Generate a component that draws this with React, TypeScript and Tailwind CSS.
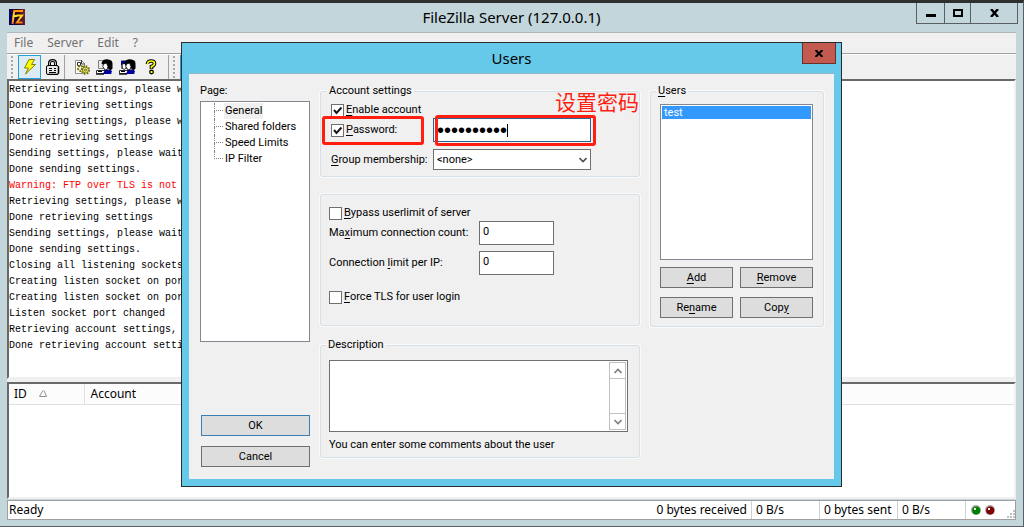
import React, { useState } from "react";

const UI = "font-['Roboto',sans-serif]";

const logLines = [
  { text: "Retrieving settings, please wait" },
  { text: "Done retrieving settings" },
  { text: "Retrieving settings, please wait" },
  { text: "Done retrieving settings" },
  { text: "Sending settings, please wait" },
  { text: "Done sending settings." },
  { text: "Warning: FTP over TLS is not", warn: true },
  { text: "Retrieving settings, please wait" },
  { text: "Done retrieving settings" },
  { text: "Sending settings, please wait" },
  { text: "Done sending settings." },
  { text: "Closing all listening sockets" },
  { text: "Creating listen socket on port" },
  { text: "Creating listen socket on port" },
  { text: "Listen socket port changed" },
  { text: "Retrieving account settings," },
  { text: "Done retrieving account settings" },
];

const pages = ["General", "Shared folders", "Speed Limits", "IP Filter"];

function AppLogo() {
  return (
    <svg width="16" height="16" viewBox="0 0 16 16">
      <defs>
        <linearGradient id="logo-bg" x1="0" y1="0.2" x2="1" y2="0">
          <stop offset="0" stopColor="#000060" />
          <stop offset="0.5" stopColor="#300818" />
          <stop offset="1" stopColor="#802838" />
        </linearGradient>
        <linearGradient id="logo-fg" gradientUnits="userSpaceOnUse" x1="0" y1="1" x2="0" y2="15">
          <stop offset="0" stopColor="#ff8800" />
          <stop offset="0.45" stopColor="#ffe820" />
          <stop offset="1" stopColor="#ff6a10" />
        </linearGradient>
      </defs>
      <rect width="16" height="16" fill="url(#logo-bg)" />
      <path d="M3.5 15 L5.2 2 H14 M4.8 7 H8" fill="none" stroke="url(#logo-fg)" strokeWidth="2" />
      <path d="M7.5 6.6 H13 L8 13.4 H13.5" fill="none" stroke="url(#logo-fg)" strokeWidth="2" />
    </svg>
  );
}

function BoltIcon() {
  return (
    <svg width="16" height="16" viewBox="0 0 16 16">
      <path d="M7 0.5 H12.5 L9.5 5.5 H13.5 L3.5 15 L6.5 9 H2.5 Z" fill="#ffff00" stroke="#808000" />
    </svg>
  );
}

function LockIcon() {
  return (
    <svg width="16" height="16" viewBox="0 0 16 16">
      <path d="M4.5 8 V4 Q4.5 1.5 7.5 1.5 T10.5 4 V8" fill="none" stroke="#000" strokeWidth="3" />
      <path d="M4.5 8 V4 Q4.5 1.5 7.5 1.5 T10.5 4 V8" fill="none" stroke="#c0c0c0" strokeWidth="1" />
      <rect x="1.5" y="6.5" width="12" height="9" rx="1.5" fill="#e8e8e8" stroke="#000" />
      <path d="M13.5 7.5 V14.5 M3 15.5 H13" stroke="#000" strokeWidth="1.5" />
      <path d="M4 9.5 H7 M9 9.5 H11 M4 11.5 H7 M9 11.5 H11 M4 13.5 H11" stroke="#000" />
    </svg>
  );
}

function SettingsIcon() {
  return (
    <svg width="16" height="16" viewBox="0 0 16 16">
      <path d="M1.5 1.5 H7.5 L10.5 4.5 V14.5 H1.5 Z" fill="#fff" stroke="#909090" />
      <path d="M7.5 1 V5 H11" fill="none" stroke="#404040" />
      <path d="M3.5 3.5 H6.5 V6.5 H3.5 Z" fill="none" stroke="#303030" />
      <circle cx="6.5" cy="9.5" r="2.5" fill="none" stroke="#808000" strokeWidth="2" strokeDasharray="2 1" />
      <circle cx="11.5" cy="11" r="3" fill="#f0e870" stroke="#808000" strokeWidth="1" />
      <circle cx="11.5" cy="11" r="4" fill="none" stroke="#606000" strokeWidth="1.5" strokeDasharray="1.5 1.6" />
      <circle cx="11.5" cy="11" r="1" fill="#fff" stroke="#404000" strokeWidth="0.8" />
    </svg>
  );
}

function UserIcon({ group }: { group?: boolean }) {
  return (
    <svg width="17" height="16" viewBox="0 0 17 16">
      <path d="M2.5 1.5 H10 V9.5 H2.5 Z" fill="#e8e8e8" stroke="#808080" />
      <path d="M0.5 11.5 H13 L15 14.5 H0.5 Z" fill="#fff" stroke="#303030" />
      <path d="M7 15 L9 10.5 H13.5 L16 12 L15 15 Z" fill="#0000a0" />
      {group && (
        <>
          <path d="M2 2 H8 V6 H2 Z" fill="#0000a0" />
          <path d="M3 5 L6 4.5 L7.5 8 L5.5 10.5 L3.5 9.5 Z" fill="#fff" stroke="#000" strokeWidth="0.8" />
        </>
      )}
      <path d="M5.5 4.5 Q6 0.2 11 0.2 Q16.5 0.5 16.5 4.5 V9.5 L14.5 11.5 L11.5 9 Z" fill="#000" />
      <path d="M7.5 5 L10.5 4 L12 7.5 L11 10.5 L9 11 L7.8 9 L6.8 7.5 Z" fill="#fff" stroke="#000" strokeWidth="0.8" />
      <path d="M0 15.2 H8 M2 12.5 H6" stroke="#000" />
    </svg>
  );
}

function HelpIcon() {
  return (
    <svg width="16" height="16" viewBox="0 0 16 16">
      <path d="M4.5 5 Q4.5 2 8 2 T11.5 4.5 Q11.5 6.5 8.5 7.5 V10" fill="none" stroke="#000" strokeWidth="3.6" />
      <circle cx="8.5" cy="13" r="2.4" fill="#000" />
      <path d="M4.5 5.5 Q4.5 2 8 2 T11.5 4.5 Q11.5 6.5 8.5 7.5 V9.5" fill="none" stroke="#ffff00" strokeWidth="1.6" />
      <rect x="7.5" y="12" width="2" height="2" fill="#ffff00" />
    </svg>
  );
}

function Led({ color }: { color: string }) {
  return (
    <svg width="10" height="10" viewBox="0 0 10 10">
      <circle cx="5" cy="5" r="5" fill="#a8a8a8" />
      <circle cx="5.2" cy="5.4" r="4" fill={color} />
      <rect x="3" y="3" width="2" height="2" fill="#fff" />
    </svg>
  );
}

function Chevron({ up, dark }: { up?: boolean; dark?: boolean }) {
  return (
    <svg width="8" height="6" viewBox="0 0 8 6">
      <path
        d={up ? "M0.5 5 L4 1.5 L7.5 5" : "M0.5 1 L4 4.5 L7.5 1"}
        fill="none"
        stroke={dark ? "#505050" : "#808080"}
        strokeWidth="1.6"
      />
    </svg>
  );
}

// Label text with its Alt-key letter underlined
function Hot({ text, at }: { text: string; at: number }) {
  return (
    <span className="whitespace-pre">
      {text.slice(0, at)}
      <span className="underline underline-offset-2">{text[at]}</span>
      {text.slice(at + 1)}
    </span>
  );
}

function Check({ text, checked, onChange }: { text: string; checked: boolean; onChange: () => void }) {
  return (
    <label className="flex items-center gap-[2px]">
      <span className="relative flex size-[13px]">
        <input
          type="checkbox"
          checked={checked}
          onChange={onChange}
          className="size-[13px] appearance-none border border-[#707070] bg-white"
        />
        {checked && (
          <svg className="pointer-events-none absolute inset-0" width="13" height="13" viewBox="0 0 13 13">
            <path d="M3 6 L5.5 9 L10.5 3.5" fill="none" stroke="#1a1a1a" strokeWidth="2" />
          </svg>
        )}
      </span>
      <Hot text={text} at={0} />
    </label>
  );
}

function DialogButton({ text, at, primary }: { text: string; at?: number; primary?: boolean }) {
  return (
    <button
      type="button"
      className={`flex h-[21px] w-full items-center justify-center border bg-[#dddddd] ${
        primary ? "border-[#3c7fb1]" : "border-[#707070]"
      }`}
    >
      {at === undefined ? text : <Hot text={text} at={at} />}
    </button>
  );
}

const groupBox = "min-w-0 rounded-[3px] border border-[#d5dfe5] shadow-[0_0_0_1px_#fafafa]";

function UsersDialog() {
  const [page, setPage] = useState("General");
  const [enabled, setEnabled] = useState(true);
  const [usePassword, setUsePassword] = useState(true);
  const [bypass, setBypass] = useState(false);
  const [forceTls, setForceTls] = useState(false);
  const [password, setPassword] = useState("••••••••••");

  return (
    <div
      role="dialog"
      aria-label="Users"
      className="absolute left-[181px] top-[39px] w-[661px] border border-[#2b2b2b] bg-[#66c9e9] px-[7px] pb-[7px]"
    >
      <div className="relative flex h-[30px] items-center justify-center">
        <h2 className="font-['Noto_Sans',sans-serif] text-[15px] text-black">Users</h2>
        <button
          type="button"
          aria-label="Close"
          className="absolute -right-[2px] top-0 flex h-[21px] w-[34px] items-center justify-center border border-t-0 border-[#6b2f2b] bg-[#c35a50]"
        >
          <svg width="8" height="7" viewBox="0 0 8 7">
            <path d="M0.5 0 L7.5 7 M7.5 0 L0.5 7" stroke="#000" strokeWidth="2" />
          </svg>
        </button>
      </div>

      <div className={`flex border-t border-[#8fb5c5] bg-[#f0f0f0] pb-3 pl-[11px] pr-[10px] pt-[9px] text-[11px] leading-4 text-black ${UI}`}>
        {/* Page tree and dialog buttons */}
        <div className="flex w-[110px] flex-col">
          <span>Page:</span>
          <ul className="mt-[2px] h-[241px] border border-[#828790] bg-white py-px pl-[13px]">
            {pages.map((p, i) => (
              <li key={p} className="flex h-4 items-center">
                <span className="flex h-4 w-[9px] flex-col">
                  <span className="h-2 border-b border-l border-dotted border-[#808080]" />
                  {i < pages.length - 1 && <span className="h-2 border-l border-dotted border-[#808080]" />}
                </span>
                <button
                  type="button"
                  onClick={() => setPage(p)}
                  className={`ml-px px-px text-left leading-4 ${page === p ? "bg-[#f0f0f0]" : ""}`}
                >
                  {p}
                </button>
              </li>
            ))}
          </ul>
          <div className="mt-[73px] flex flex-col gap-[10px] pl-px">
            <DialogButton text="OK" primary />
            <DialogButton text="Cancel" />
          </div>
        </div>

        {/* Account settings */}
        <div className="ml-[10px] flex w-[320px] flex-col">
          <fieldset className={`relative ${groupBox} pb-[6px] pl-[10px]`}>
            <legend className="-ml-1 px-[2px]">Account settings</legend>
            <div className="mt-[3px] flex h-4 items-center">
              <Check text="Enable account" checked={enabled} onChange={() => setEnabled(!enabled)} />
            </div>
            <div className="grid grid-cols-[102px_158px] items-center gap-y-[7px]">
              <Check text="Password:" checked={usePassword} onChange={() => setUsePassword(!usePassword)} />
              <div className="flex h-6 items-center border border-[#2a6496] bg-white px-[3px]">
                <input
                  aria-label="Password"
                  value={password}
                  onChange={(e) => setPassword(e.target.value)}
                  className="w-[70px] bg-transparent font-['Liberation_Sans',sans-serif] text-[20px] leading-5 outline-none"
                />
                <span className="h-[13px] w-px bg-black" />
              </div>
              <label htmlFor="group">
                <Hot text="Group membership:" at={0} />
              </label>
              <div className="relative">
                <select id="group" className="block h-[21px] w-full appearance-none border border-[#707070] bg-white pl-[3px]">
                  <option>&lt;none&gt;</option>
                </select>
                <span className="pointer-events-none absolute inset-y-0 right-1 flex items-center">
                  <Chevron dark />
                </span>
              </div>
            </div>

            {/* Highlight marks */}
            <div className="pointer-events-none absolute left-px top-[17px] h-[29px] w-[102px] rounded-[3px] border-[3px] border-[#ff1e10]" />
            <div className="pointer-events-none absolute left-[114px] top-4 h-[31px] w-[161px] rounded-[3px] border-[3px] border-[#ff1e10]" />
            <span className="pointer-events-none absolute -top-3 right-0 font-['Noto_Sans_CJK_SC',sans-serif] text-[21px] leading-7 text-[#ff1e10]">
              设置密码
            </span>
          </fieldset>

          <fieldset className={`${groupBox} mt-[17px] pb-5 pl-2 pt-[10px]`}>
            <div className="flex h-4 items-center">
              <Check text="Bypass userlimit of server" checked={bypass} onChange={() => setBypass(!bypass)} />
            </div>
            <div className="grid grid-cols-[150px_75px] items-center gap-y-[6px]">
              <label htmlFor="max-count">
                <Hot text="Maximum connection count:" at={2} />
              </label>
              <input id="max-count" defaultValue="0" className="h-6 border border-[#707070] bg-white pb-1 pl-[3px] outline-none" />
              <label htmlFor="ip-limit">
                <Hot text="Connection limit per IP:" at={11} />
              </label>
              <input id="ip-limit" defaultValue="0" className="h-6 border border-[#707070] bg-white pb-1 pl-[3px] outline-none" />
            </div>
            <div className="mt-[14px] flex h-4 items-center">
              <Check text="Force TLS for user login" checked={forceTls} onChange={() => setForceTls(!forceTls)} />
            </div>
          </fieldset>

          <fieldset className={`${groupBox} mt-[11px] pb-1 pl-2 pr-[11px]`}>
            <legend className="-ml-[3px] px-[2px]">Description</legend>
            <div className="mt-[7px] flex h-[72px] border border-[#707070] bg-white p-px">
              <textarea aria-label="Description" className="min-w-0 flex-1 resize-none outline-none" />
              <div className="flex w-[17px] flex-col border border-[#c0c0c0]">
                <span className="flex h-4 items-center justify-center border-b border-[#c0c0c0]">
                  <Chevron up />
                </span>
                <span className="flex-1" />
                <span className="flex h-4 items-center justify-center border-t border-[#c0c0c0]">
                  <Chevron />
                </span>
              </div>
            </div>
            <p className="mt-[5px]">You can enter some comments about the user</p>
          </fieldset>
        </div>

        {/* User list */}
        <div className="ml-[10px] min-w-0 flex-1">
          <fieldset className={`${groupBox} pb-2 pl-[9px] pr-[10px]`}>
            <legend className="-ml-1 px-[2px]">
              <Hot text="Users" at={0} />
            </legend>
            <ul className="mt-[5px] h-[156px] border border-[#828790] bg-white p-px">
              <li className="h-[13px] bg-[#3399ff] pl-[2px] leading-[13px] text-white">test</li>
            </ul>
            <div className="mt-[7px] grid grid-cols-2 gap-x-[7px] gap-y-[9px]">
              <DialogButton text="Add" at={0} />
              <DialogButton text="Remove" at={0} />
              <DialogButton text="Rename" at={2} />
              <DialogButton text="Copy" at={3} />
            </div>
          </fieldset>
        </div>
      </div>
    </div>
  );
}

function Grip() {
  return (
    <svg width="3" height="22" viewBox="0 0 3 22" className="mx-1">
      {[0, 4, 8, 12, 16, 20].map((y) => (
        <rect key={y} x="0" y={y} width="2" height="2" fill="#a8a8a8" />
      ))}
    </svg>
  );
}

export default function App() {
  return (
    <div className="relative flex h-screen flex-col border-b border-r border-t-[3px] border-[#5a5f66] border-t-[#2f2f2f] bg-[#c3d6db] px-[7px] pb-[6px] font-['Noto_Sans',sans-serif] text-[12px] text-black">
      {/* Title bar */}
      <header className="relative flex h-[29px] shrink-0 items-center justify-center">
        <span className="absolute left-[2px] top-[6px]">
          <AppLogo />
        </span>
        <h1 className="text-[15px]">FileZilla Server (127.0.0.1)</h1>
        <div className="absolute -right-[2px] top-0 flex h-[21px] divide-x divide-[#5a5f66] border border-t-0 border-[#5a5f66]">
          <button type="button" aria-label="Minimize" className="flex w-7 items-center justify-center pt-1">
            <span className="h-[3px] w-[10px] bg-black" />
          </button>
          <button type="button" aria-label="Maximize" className="flex w-[26px] items-center justify-center">
            <span className="h-2 w-[10px] border-2 border-black" />
          </button>
          <button type="button" aria-label="Close" className="flex w-[46px] items-center justify-center">
            <svg width="9" height="8" viewBox="0 0 9 8">
              <path d="M1 0 L8 8 M8 0 L1 8" stroke="#000" strokeWidth="2.4" />
            </svg>
          </button>
        </div>
      </header>

      <nav className="flex h-[22px] shrink-0 items-center gap-[14px] border-b border-t border-b-[#a0a0a0] border-t-[#b0b8bc] bg-[#f0f0f0] pl-[7px] text-[#707070]">
        <button type="button">File</button>
        <button type="button">Server</button>
        <button type="button">Edit</button>
        <button type="button">?</button>
      </nav>

      {/* Toolbar */}
      <div className="flex h-[25px] shrink-0 items-center border-t border-white bg-[#f0f0f0]">
        <Grip />
        <button type="button" aria-label="Connect" className="flex h-6 w-[23px] items-center justify-center border border-[#26a0da] bg-[#dcebf4]">
          <BoltIcon />
        </button>
        <button type="button" aria-label="Lock server" className="flex h-6 w-[23px] items-center justify-center">
          <LockIcon />
        </button>
        <span className="h-6 w-px bg-[#a0a0a0]" />
        <button type="button" aria-label="Settings" className="ml-[5px] flex h-6 w-[23px] items-center justify-center">
          <SettingsIcon />
        </button>
        <button type="button" aria-label="Users" className="flex h-6 w-[23px] items-center justify-center">
          <UserIcon />
        </button>
        <button type="button" aria-label="Groups" className="flex h-6 w-[23px] items-center justify-center">
          <UserIcon group />
        </button>
        <button type="button" aria-label="About" className="flex h-6 w-[23px] items-center justify-center">
          <HelpIcon />
        </button>
        <span className="ml-[6px] h-6 w-px bg-[#a0a0a0]" />
        <Grip />
        <button type="button" aria-label="Sort" className="h-6 w-[23px] border border-[#26a0da] bg-[#dcebf4]" />
      </div>

      {/* Message log */}
      <div className="min-h-0 flex-1 overflow-hidden border-2 border-b-[#f0f0f0] border-l-[#696969] border-r-[#f0f0f0] border-t-[#696969] bg-white pt-px font-['Liberation_Mono',monospace] text-[10px] leading-4">
        {logLines.map((line, i) => (
          <p key={i} className={`whitespace-nowrap ${line.warn ? "text-[#ff0000]" : ""}`}>
            {line.text}
          </p>
        ))}
      </div>

      {/* Connections */}
      <div className="h-[3px] shrink-0 bg-[#f0f0f0]" />
      <div className="h-[117px] shrink-0 border-2 border-b-[#f0f0f0] border-l-[#696969] border-r-[#f0f0f0] border-t-[#696969] bg-white">
        <table className="w-full table-fixed border-collapse">
          <thead>
            <tr className="h-5 border-b border-[#e0e0e0] bg-[#fcfcfc] text-left">
              <th className="w-[75px] border-r border-[#e0e0e0] pl-[5px] font-normal">
                <span className="flex items-center gap-3">
                  ID
                  <svg width="8" height="7" viewBox="0 0 8 7">
                    <path d="M4 0.5 L0.5 6.5 H7.5 L5 0.5" fill="none" stroke="#909090" />
                  </svg>
                </span>
              </th>
              <th className="pl-[6px] font-normal">Account</th>
            </tr>
          </thead>
        </table>
      </div>

      {/* Status bar */}
      <footer className="mt-px flex h-5 shrink-0 items-center border border-[#a0a0a0] bg-white pl-px">
        <span className="flex-1">Ready</span>
        <span className="w-[99px] border-r border-[#d0d0d0] pr-1 text-right">0 bytes received</span>
        <span className="w-[68px] border-r border-[#d0d0d0] pl-1">0 B/s</span>
        <span className="w-[78px] border-r border-[#d0d0d0] pl-1">0 bytes sent</span>
        <span className="w-[68px] border-r border-[#d0d0d0] pl-1">0 B/s</span>
        <span className="flex w-[49px] items-center gap-1 pl-[5px]">
          <Led color="#008000" />
          <Led color="#800000" />
          <svg className="ml-auto mt-2" width="8" height="8" viewBox="0 0 8 8">
            <path d="M6 0h2v2h-2z M3 3h2v2h-2z M6 3h2v2h-2z M0 6h2v2h-2z M3 6h2v2h-2z M6 6h2v2h-2z" fill="#c0c0c0" />
          </svg>
        </span>
      </footer>

      <UsersDialog />
    </div>
  );
}
